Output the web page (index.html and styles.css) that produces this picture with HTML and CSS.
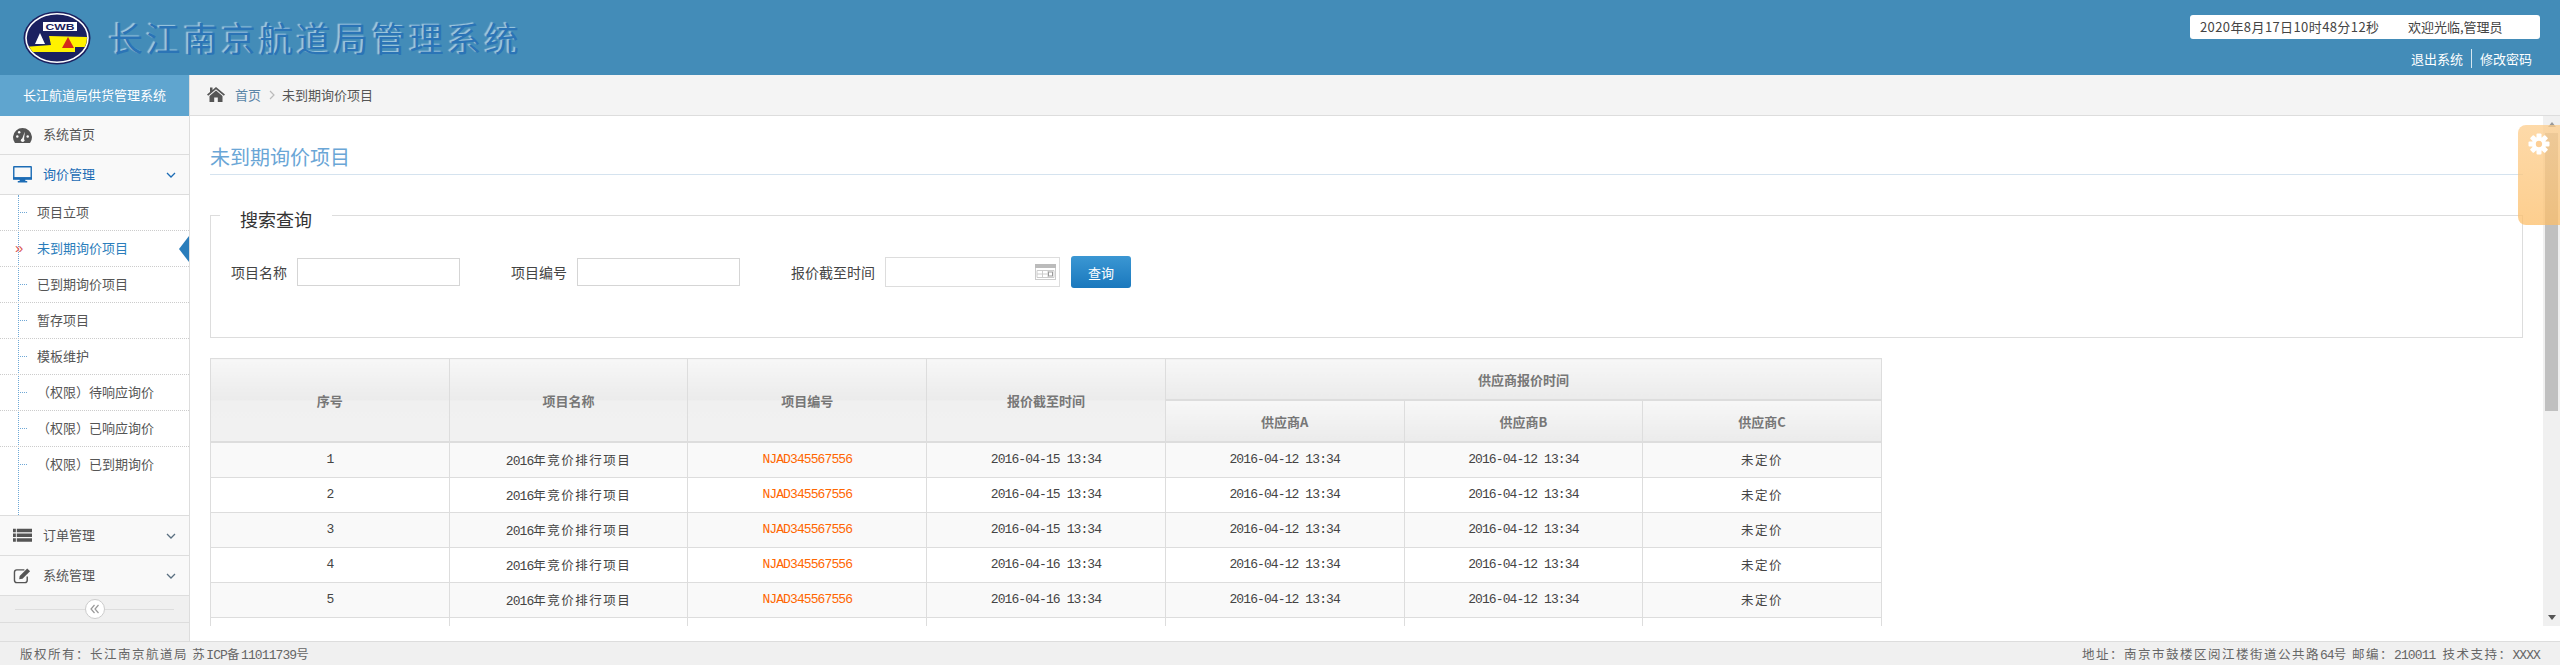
FILE: index.html
```html
<!DOCTYPE html>
<html>
<head>
<meta charset="utf-8">
<title>长江南京航道局管理系统</title>
<link rel="stylesheet" href="styles.css">
</head>
<body>
<div class="header">
    <div class="brand">
        <svg class="logo" viewBox="0 0 68 54">
            <ellipse cx="34" cy="27" rx="33.5" ry="26.5" fill="#1b2160"/>
            <ellipse cx="34" cy="27" rx="31" ry="24.2" fill="#1b2160" stroke="#fff" stroke-width="1.6"/>
            <clipPath id="logo-clip"><ellipse cx="34" cy="27" rx="30" ry="23.4"/></clipPath>
            <path clip-path="url(#logo-clip)" d="M26 25L68 26V36H52V41H2V36L28 34Z" fill="#fff200"/>
            <rect x="20" y="11" width="34" height="9" fill="#fff"/>
            <text x="37" y="19.200" class="logo-text" text-anchor="middle" textLength="29" lengthAdjust="spacingAndGlyphs">CWB</text>
            <path d="M12 33L17 22L22 33Z" fill="#fff"/>
            <path d="M39 37L45 26L51 37Z" fill="#d42a1c"/>
        </svg>
        <h1 class="brand-title">长江南京航道局管理系统</h1>
    </div>
    <div class="user">
        <div class="user-box">
            <span class="user-time">2020年8月17日10时48分12秒</span>
            <span>欢迎光临,管理员</span>
        </div>
        <div class="user-links">
            <a>退出系统</a>
            <a class="user-link-last">修改密码</a>
        </div>
    </div>
</div>

<div class="middle">
    <div class="side">
        <div class="side-title">长江航道局供货管理系统</div>
        <div class="nav-head nav-first">
            <svg class="nav-icon" viewBox="0 0 20 18">
                <path d="M2 17A10 10 0 1 1 18 17Z" fill="#555"/>
                <circle cx="4.5" cy="10" r="1.3" fill="#f9f9f9"/>
                <circle cx="6.5" cy="5.5" r="1.3" fill="#f9f9f9"/>
                <circle cx="15.5" cy="10" r="1.3" fill="#f9f9f9"/>
                <path d="M9 14L12.5 5L11.5 14Z" fill="#f9f9f9"/>
                <circle cx="10.2" cy="14" r="1.9" fill="#f9f9f9"/>
            </svg>
            <span>系统首页</span>
        </div>
        <div class="nav-head nav-open">
            <svg class="nav-icon" viewBox="0 0 20 18">
                <path d="M1 0H19Q20 0 20 1V14H0V1Q0 0 1 0ZM1.5 1.5V12H18.5V1.5Z" fill="#1c6cb5" fill-rule="evenodd"/>
                <path d="M0 12H20V14.500H13V16H15V17.500H5V16H7V14.500H0Z" fill="#1c6cb5"/>
            </svg>
            <span>询价管理</span>
            <svg class="nav-chevron" viewBox="0 0 10 6"><path d="M1 1L5 5L9 1" fill="none" stroke="#1c6cb5" stroke-width="1.300"/></svg>
        </div>
        <ul class="sub">
            <li>项目立项</li>
            <li class="sub-active">未到期询价项目</li>
            <li>已到期询价项目</li>
            <li>暂存项目</li>
            <li>模板维护</li>
            <li>（权限）待响应询价</li>
            <li>（权限）已响应询价</li>
            <li class="sub-last">（权限）已到期询价</li>
        </ul>
        <div class="nav-head nav-top">
            <svg class="nav-icon" viewBox="0 0 20 16">
                <path d="M0 1H3V4.500H0ZM4 1H20V4.500H4ZM0 6H3V9.500H0ZM4 6H20V9.500H4ZM0 11H3V14.500H0ZM4 11H20V14.500H4Z" fill="#555"/>
            </svg>
            <span>订单管理</span>
            <svg class="nav-chevron" viewBox="0 0 10 6"><path d="M1 1L5 5L9 1" fill="none" stroke="#5a6f80" stroke-width="1.300"/></svg>
        </div>
        <div class="nav-head">
            <svg class="nav-icon" viewBox="0 0 20 18">
                <path d="M12 3H4Q1.500 3 1.500 5.500V14Q1.500 16.500 4 16.500H12.500Q15 16.500 15 14V10" fill="none" stroke="#555" stroke-width="1.500"/>
                <path d="M7 9.500L15 1.500L18 4.500L10 12.500L6.500 13Z" fill="#555"/>
            </svg>
            <span>系统管理</span>
            <svg class="nav-chevron" viewBox="0 0 10 6"><path d="M1 1L5 5L9 1" fill="none" stroke="#5a6f80" stroke-width="1.300"/></svg>
        </div>
        <div class="collapse">
            <span class="collapse-btn">
                <svg class="collapse-icon" viewBox="0 0 10 10"><path d="M4.500 1L1 5L4.500 9M8.500 1L5 5L8.500 9" fill="none" stroke="#999" stroke-width="1.200"/></svg>
            </span>
        </div>
    </div>

    <div class="main">
        <div class="crumb">
            <svg class="crumb-home" viewBox="0 0 18 16">
                <path d="M9 1L18 8.500L16.800 9.800L9 3.300L1.200 9.800L0 8.500L3 6V1.500H5.500V3.900Z" fill="#555"/>
                <path d="M9 4.500L15.500 10V16H10.800V11.500H7.200V16H2.500V10Z" fill="#555"/>
            </svg>
            <a class="crumb-link">首页</a>
            <svg class="crumb-sep" viewBox="0 0 6 10"><path d="M1 1L5 5L1 9" fill="none" stroke="#bbb" stroke-width="1.200"/></svg>
            <span>未到期询价项目</span>
        </div>
        <div class="pane">
            <div class="content">
                <h2 class="page-title">未到期询价项目</h2>
                <fieldset class="search">
                    <legend>搜索查询</legend>
                    <div class="search-row">
                        <label class="field">项目名称<input class="input" type="text"></label>
                        <label class="field">项目编号<input class="input" type="text"></label>
                        <label class="field field-date">报价截至时间
                            <span class="date">
                                <input class="input input-date" type="text">
                                <svg class="date-icon" viewBox="0 0 21 16">
                                    <rect x="0.500" y="0.500" width="20" height="15" fill="#fff" stroke="#ccc"/>
                                    <rect x="0" y="0" width="21" height="4" fill="#bbb"/>
                                    <path d="M2 6.500H19V13.500H2ZM7.500 6.500V13.500M13 6.500V13.500M2 10H13" fill="none" stroke="#ccc"/>
                                    <rect x="13.500" y="8" width="4" height="4" fill="none" stroke="#999"/>
                                </svg>
                            </span>
                        </label>
                        <button class="btn" type="button">查询</button>
                    </div>
                </fieldset>
                <table class="grid">
                    <thead>
                        <tr>
                            <th class="th-span" rowspan="2">序号</th>
                            <th class="th-span" rowspan="2">项目名称</th>
                            <th class="th-span" rowspan="2">项目编号</th>
                            <th class="th-span" rowspan="2">报价截至时间</th>
                            <th colspan="3">供应商报价时间</th>
                        </tr>
                        <tr>
                            <th>供应商A</th>
                            <th>供应商B</th>
                            <th>供应商C</th>
                        </tr>
                    </thead>
                    <tbody>
                        <tr>
                            <td>1</td>
                            <td>2016<span class="zh">年竞价排行项目</span></td>
                            <td class="code">NJAD345567556</td>
                            <td>2016-04-15 13:34</td>
                            <td>2016-04-12 13:34</td>
                            <td>2016-04-12 13:34</td>
                            <td><span class="zh">未定价</span></td>
                        </tr>
                        <tr>
                            <td>2</td>
                            <td>2016<span class="zh">年竞价排行项目</span></td>
                            <td class="code">NJAD345567556</td>
                            <td>2016-04-15 13:34</td>
                            <td>2016-04-12 13:34</td>
                            <td>2016-04-12 13:34</td>
                            <td><span class="zh">未定价</span></td>
                        </tr>
                        <tr>
                            <td>3</td>
                            <td>2016<span class="zh">年竞价排行项目</span></td>
                            <td class="code">NJAD345567556</td>
                            <td>2016-04-15 13:34</td>
                            <td>2016-04-12 13:34</td>
                            <td>2016-04-12 13:34</td>
                            <td><span class="zh">未定价</span></td>
                        </tr>
                        <tr>
                            <td>4</td>
                            <td>2016<span class="zh">年竞价排行项目</span></td>
                            <td class="code">NJAD345567556</td>
                            <td>2016-04-16 13:34</td>
                            <td>2016-04-12 13:34</td>
                            <td>2016-04-12 13:34</td>
                            <td><span class="zh">未定价</span></td>
                        </tr>
                        <tr>
                            <td>5</td>
                            <td>2016<span class="zh">年竞价排行项目</span></td>
                            <td class="code">NJAD345567556</td>
                            <td>2016-04-16 13:34</td>
                            <td>2016-04-12 13:34</td>
                            <td>2016-04-12 13:34</td>
                            <td><span class="zh">未定价</span></td>
                        </tr>
                        <tr>
                            <td></td>
                            <td></td>
                            <td></td>
                            <td></td>
                            <td></td>
                            <td></td>
                            <td></td>
                        </tr>
                    </tbody>
                </table>
            </div>
            <div class="bar">
                <span class="bar-btn"><i class="bar-up"></i></span>
                <div class="bar-thumb"></div>
                <span class="bar-btn bar-btn-end"><i class="bar-down"></i></span>
            </div>
        </div>
        <div class="tab">
            <svg class="tab-gear" viewBox="0 0 22 22">
                <g fill="#fff">
                    <rect x="8.500" y="0.500" width="5" height="21" rx="1"/>
                    <rect x="8.500" y="0.500" width="5" height="21" rx="1" transform="rotate(45 11 11)"/>
                    <rect x="8.500" y="0.500" width="5" height="21" rx="1" transform="rotate(90 11 11)"/>
                    <rect x="8.500" y="0.500" width="5" height="21" rx="1" transform="rotate(135 11 11)"/>
                    <circle cx="11" cy="11" r="7"/>
                </g>
                <circle cx="11" cy="11" r="3.200" fill="#fdcf96"/>
            </svg>
        </div>
    </div>
</div>

<div class="footer">
    <div><span class="zh">版权所有：长江南京航道局 苏</span>ICP<span class="zh">备</span>11011739<span class="zh">号</span></div>
    <div><span class="zh">地址：南京市鼓楼区阅江楼街道公共路</span>64<span class="zh">号 邮编：</span>210011 <span class="zh">技术支持：</span>XXXX</div>
</div>
</body>
</html>
```
FILE: styles.css
```css
html, body {
    margin: 0;
    height: 100%;
    overflow: hidden;
}
body {
    display: flex;
    flex-direction: column;
    font: 13px "Noto Sans CJK SC", sans-serif;
    color: #555;
    background: #fff;
}

/* header */
.header {
    flex: none;
    display: flex;
    justify-content: space-between;
    height: 75px;
    background: #438cb8;
}
.brand {
    display: flex;
    align-items: center;
    padding-left: 23px;
}
.logo {
    width: 68px;
    height: 54px;
}
.logo-text {
    font: bold 9.500px "Liberation Sans", sans-serif;
    fill: #1b2160;
}
.brand-title {
    margin: 0 0 0 18px;
    font-size: 34px;
    font-weight: normal;
    letter-spacing: 3.600px;
    color: #2b74b6;
    text-shadow: -2px -1px 1px rgba(175, 210, 230, .85);
}
.user {
    display: flex;
    flex-direction: column;
    align-items: flex-end;
    padding: 15px 20px 0 0;
}
.user-box {
    display: flex;
    align-items: center;
    box-sizing: border-box;
    width: 350px;
    height: 24px;
    padding: 0 0 2px 10px;
    border-radius: 3px;
    background: #fff;
    color: #444;
}
.user-time {
    width: 208px;
    letter-spacing: .4px;
}
.user-links {
    display: flex;
    margin-top: 10px;
    padding-right: 8px;
    line-height: 19px;
    color: #fff;
}
.user-links a {
    padding-right: 8px;
    border-right: 1px solid #d5e6f0;
}
.user-links .user-link-last {
    padding: 0 0 0 8px;
    border: none;
}

.middle {
    flex: 1;
    display: flex;
    min-height: 0;
}

/* left nav */
.side {
    flex: none;
    display: flex;
    flex-direction: column;
    width: 189px;
    border-right: 1px solid #ddd;
    background: #f0f0f0;
}
.side-title {
    height: 41px;
    line-height: 39px;
    text-align: center;
    background: #5fa5cf;
    color: #fff;
}
.nav-head {
    display: flex;
    align-items: center;
    box-sizing: border-box;
    height: 40px;
    padding-left: 13px;
    border-bottom: 1px solid #ddd;
    background: #f9f9f9;
}
.nav-head span {
    margin-top: -3px;
}
.nav-first {
    height: 39px;
}
.nav-top {
    border-top: 1px solid #ddd;
    height: 41px;
}
.nav-open {
    color: #1c6cb5;
}
.nav-icon {
    flex: none;
    width: 19px;
    height: 17px;
    margin-right: 11px;
}
.nav-chevron {
    width: 10px;
    height: 6px;
    margin-left: auto;
    margin-right: 13px;
}
.sub {
    position: relative;
    flex: none;
    box-sizing: border-box;
    height: 320px;
    margin: 0;
    padding: 0;
    list-style: none;
    background: #fff;
}
.sub::before {
    content: "";
    position: absolute;
    left: 18px;
    top: 0;
    bottom: 0;
    border-left: 1px dotted #6fa8d6;
}
.sub li {
    position: relative;
    box-sizing: border-box;
    height: 36px;
    line-height: 33px;
    padding-left: 37px;
    border-bottom: 1px dotted #ccc;
}
.sub li::before {
    content: "";
    position: absolute;
    left: 20px;
    top: 17px;
    width: 7px;
    border-top: 1px dotted #6fa8d6;
}
.sub .sub-last {
    border-bottom: none;
}
.sub .sub-active {
    color: #2a7dbb;
}
.sub .sub-active::before {
    content: "»";
    left: 15px;
    top: 0;
    width: auto;
    border: none;
    color: #d9534f;
    font: 15px/33px "Liberation Sans", sans-serif;
}
.sub .sub-active::after {
    content: "";
    position: absolute;
    right: 0;
    top: 5px;
    border-style: solid;
    border-width: 13px 10px 13px 0;
    border-color: transparent #2a7dbb transparent transparent;
}
.collapse {
    position: relative;
    display: flex;
    justify-content: center;
    align-items: center;
    flex: none;
    height: 26px;
    border-bottom: 1px solid #ddd;
}
.collapse::before {
    content: "";
    position: absolute;
    left: 15px;
    right: 15px;
    top: 13px;
    border-top: 1px solid #ddd;
}
.collapse-btn {
    position: relative;
    display: flex;
    justify-content: center;
    align-items: center;
    box-sizing: border-box;
    width: 20px;
    height: 20px;
    border: 1px solid #ccc;
    border-radius: 50%;
    background: #fff;
}
.collapse-icon {
    width: 10px;
    height: 10px;
}

/* main */
.main {
    position: relative;
    flex: 1;
    min-width: 0;
    padding-bottom: 15px;
}
.crumb {
    display: flex;
    align-items: center;
    box-sizing: border-box;
    height: 41px;
    padding: 0 0 2px 17px;
    border-bottom: 1px solid #ddd;
    background: #f4f4f4;
}
.crumb-home {
    width: 18px;
    height: 16px;
    margin-right: 10px;
}
.crumb-link {
    color: #5b86a8;
}
.crumb-sep {
    width: 6px;
    height: 10px;
    margin: 2px 7px 0 8px;
}
.pane {
    display: flex;
    height: 510px;
    background: #fff;
}
.content {
    flex: 1;
    min-width: 0;
    overflow: hidden;
    padding: 28px 20px 0;
}
.bar {
    flex: none;
    display: flex;
    flex-direction: column;
    align-items: center;
    width: 17px;
    background: #f0f0f0;
}
.bar-btn {
    display: flex;
    justify-content: center;
    align-items: center;
    height: 17px;
}
.bar-btn-end {
    margin-top: auto;
}
.bar-up {
    border-style: solid;
    border-width: 0 4.500px 5px;
    border-color: transparent transparent #999;
}
.bar-down {
    border-style: solid;
    border-width: 5px 4.500px 0;
    border-color: #555 transparent transparent;
}
.bar-thumb {
    width: 13px;
    height: 278px;
    background: #c0c0c0;
}
.page-title {
    box-sizing: border-box;
    height: 31px;
    margin: 0;
    font-size: 20px;
    font-weight: normal;
    line-height: 26px;
    color: #6aa6d6;
    border-bottom: 1px solid #d5e3ef;
}
.search {
    margin: 23px 0 0;
    padding: 24px 20px 49px;
    border: 1px solid #ddd;
}
.search legend {
    margin-left: -11px;
    padding: 8px 20px 0;
    font-size: 18px;
    line-height: 26px;
    color: #333;
}
.search-row {
    display: flex;
    align-items: center;
    height: 32px;
}
.field {
    display: flex;
    align-items: center;
    margin-right: 51px;
    font-size: 14px;
    color: #444;
}
.input {
    box-sizing: border-box;
    width: 163px;
    height: 28px;
    margin: 0 0 0 10px;
    padding: 0 6px;
    border: 1px solid #d5d5d5;
    background: #fff;
}
.date {
    position: relative;
    display: block;
}
.input-date {
    display: block;
    width: 175px;
    height: 30px;
    border-color: #ddd;
}
.date-icon {
    position: absolute;
    right: 4px;
    top: 7px;
    width: 21px;
    height: 16px;
}
.field-date {
    margin-right: 11px;
}
.btn {
    width: 60px;
    height: 32px;
    padding: 0;
    border: none;
    border-radius: 3px;
    background: linear-gradient(#3b97d3, #1a78bd);
    color: #fff;
    font: 13px "Noto Sans CJK SC", sans-serif;
}

/* table */
.grid {
    width: 1672px;
    margin-top: 20px;
    table-layout: fixed;
    border-collapse: collapse;
    font: 13px "Liberation Mono", "Noto Sans CJK SC", monospace;
    letter-spacing: -.9px;
    color: #444;
}
.grid th, .grid td {
    border: 1px solid #ddd;
    padding: 0;
    text-align: center;
}
.grid th {
    height: 40px;
    font: bold 13px "Noto Sans CJK SC", sans-serif;
    letter-spacing: 0;
    color: #777;
    border-bottom-width: 2px;
    background: linear-gradient(#f7f7f7, #ebebeb);
}
.grid .th-span {
    background: linear-gradient(#f7f7f7, #ebebeb 50%, #f0f0f0 50%, #f1f1f1);
}
.grid td {
    box-sizing: border-box;
    height: 35px;
}
.grid tbody tr:nth-child(odd) {
    background: #f9f9f9;
}
.grid .code {
    color: #f60;
}
.zh {
    font: 12.500px "Noto Sans CJK SC", sans-serif;
    letter-spacing: 1.500px;
}

/* floating tab */
.tab {
    position: absolute;
    right: 0;
    top: 50px;
    width: 42px;
    height: 100px;
    border-radius: 8px 0 0 8px;
    background: linear-gradient(rgba(253, 205, 140, .75), rgba(252, 190, 105, .75));
}
.tab-gear {
    display: block;
    width: 22px;
    height: 22px;
    margin: 8px 0 0 10px;
}

.footer {
    flex: none;
    display: flex;
    justify-content: space-between;
    align-items: center;
    box-sizing: border-box;
    height: 24px;
    padding: 0 20px;
    border-top: 1px solid #ddd;
    background: #f0f0f0;
    font: 13px "Liberation Mono", "Noto Sans CJK SC", monospace;
    letter-spacing: -.9px;
    color: #666;
}
```
